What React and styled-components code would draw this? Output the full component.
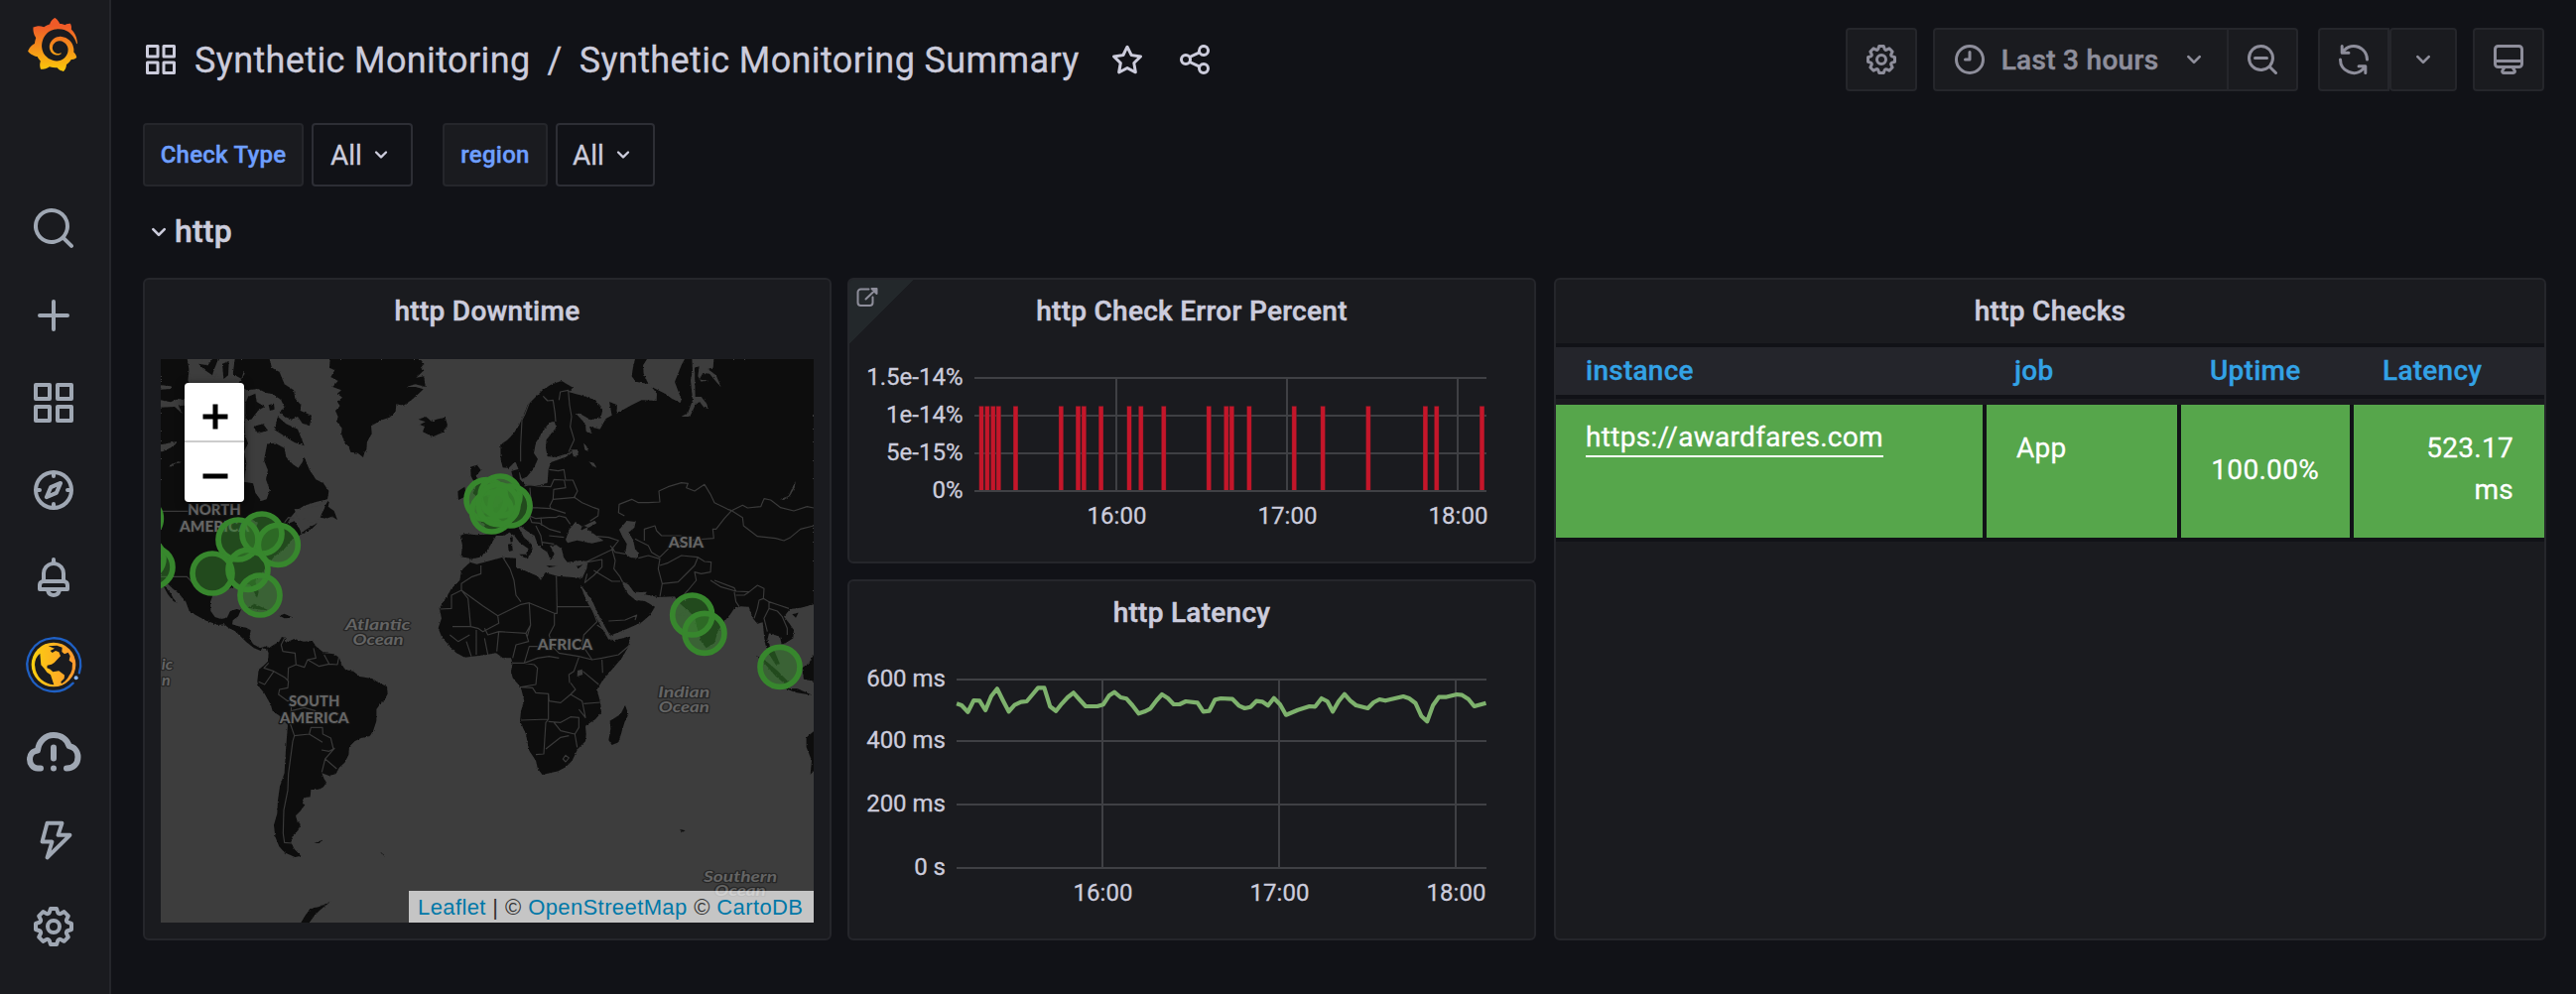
import React from 'react';
import styled, { createGlobalStyle } from 'styled-components';
import { SiGrafana } from 'react-icons/si';

const GlobalStyle = createGlobalStyle`
  * { box-sizing: border-box; }
  body { margin: 0; background: #111217; color: #ccccdc; font-family: Roboto, sans-serif; }
`;

const Page = styled.div`
  display: flex;
  width: 2596px;
  height: 1002px;
  overflow: hidden;
  background: #111217;
`;

const Sidebar = styled.nav`
  display: flex;
  flex-direction: column;
  align-items: center;
  width: 112px;
  padding-top: 18px;
  padding-right: 2px;
  background: #1a1b1f;
  border-right: 2px solid #25262b;
  color: #9fa7b3;
`;

const Logo = styled.div`
  height: 54px;
  margin-bottom: 114px;
  margin-right: 2px;
  svg { display: block; width: 54px; height: 54px; }
`;

const NavItem = styled.a`
  display: flex;
  align-items: center;
  justify-content: center;
  width: 88px;
  height: 88px;
  flex-shrink: 0;
  svg { overflow: visible; }
`;

const Main = styled.main`
  flex: 1;
  padding: 28px 30px 0 32px;
`;

const Header = styled.header`
  display: flex;
  align-items: center;
  height: 64px;
  padding-right: 2px;
`;

const Crumb = styled.span`
  margin-left: ${p => p.$gap}px;
  padding-top: 2px;
  font-size: 36px;
  line-height: 64px;
  letter-spacing: 0.38px;
  white-space: pre;
  -webkit-text-stroke: 0.3px currentColor;
`;

const HeaderIcon = styled.span`
  display: flex;
  margin-left: ${p => p.$gap || 0}px;
`;

const Spacer = styled.div`
  flex: 1;
`;

const ToolButton = styled.button`
  display: flex;
  align-items: center;
  justify-content: center;
  width: ${p => p.$width}px;
  height: 64px;
  margin: 0 0 0 ${p => p.$gap || 0}px;
  padding: 0;
  background: #1a1b1f;
  border: 2px solid #25262b;
  border-left-width: ${p => (p.$joined ? 0 : 2)}px;
  border-radius: ${p => p.$radius || '4px'};
  color: #8e8e9b;
  font: 500 28px Roboto, sans-serif;
`;

const RangeText = styled.span`
  margin: 0 20px 0 14px;
  letter-spacing: 0.3px;
  -webkit-text-stroke: 0.5px currentColor;
`;

const Filters = styled.div`
  display: flex;
  margin-top: 32px;
`;

const FilterLabel = styled.label`
  display: flex;
  align-items: center;
  justify-content: center;
  width: ${p => p.$width}px;
  height: 64px;
  margin-left: ${p => p.$gap || 0}px;
  background: #1a1b1f;
  border: 2px solid #25262b;
  border-radius: 4px;
  color: #6e9fff;
  font-size: 24px;
  font-weight: 500;
  letter-spacing: 0.26px;
  -webkit-text-stroke: 0.4px currentColor;
`;

const FilterSelect = styled.div`
  display: flex;
  align-items: center;
  width: ${p => p.$width}px;
  height: 64px;
  margin-left: 8px;
  padding-left: ${p => p.$pad}px;
  border: 2px solid #2d2e35;
  border-radius: 4px;
  font-size: 28px;
  -webkit-text-stroke: 0.3px currentColor;
  svg { margin-left: 5px; }
`;

const RowTitle = styled.h2`
  display: flex;
  align-items: center;
  height: 92px;
  margin: 0;
  padding: 0 0 2px;
  font-size: 32px;
  font-weight: 500;
  letter-spacing: 0.2px;
  -webkit-text-stroke: 0.5px currentColor;
  svg { margin-top: 2px; }
`;

const Grid = styled.section`
  display: grid;
  grid-template-columns: 694px 694px 1000px;
  grid-template-rows: 288px 364px;
  column-gap: 16px;
  row-gap: 16px;
`;

const Panel = styled.article`
  position: relative;
  display: flex;
  flex-direction: column;
  grid-row: ${p => p.$row || 'auto'};
  grid-column: ${p => p.$col};
  margin-left: ${p => p.$shift || 0}px;
  margin-right: -${p => p.$shift || 0}px;
  background: #1a1b1f;
  border: 2px solid #25262b;
  border-radius: 6px;
  overflow: hidden;
`;

const PanelTitle = styled.h3`
  height: 64px;
  margin: 0;
  font-size: 28px;
  font-weight: 500;
  line-height: 64px;
  letter-spacing: 0.28px;
  text-align: center;
  -webkit-text-stroke: 0.5px currentColor;
`;

const PanelCorner = styled.div`
  position: absolute;
  left: 0;
  top: 0;
  width: 64px;
  height: 64px;
  background: linear-gradient(135deg, #23282b 50%, transparent 50.5%);
  color: #8e8e9b;
  svg { margin: 5px 0 0 6px; }
`;

const MapFrame = styled.div`
  position: relative;
  width: 658px;
  height: 568px;
  margin: 16px 0 0 16px;
  background: #3c3c3c;
  overflow: hidden;
`;

const ZoomControl = styled.div`
  position: absolute;
  left: 24px;
  top: 24px;
  width: 60px;
  height: 120px;
  background: #fff;
  border-radius: 4px;
  box-shadow: 0 2px 10px rgba(0, 0, 0, 0.65);
`;

const ZoomButton = styled.div`
  display: flex;
  justify-content: center;
  height: 60px;
  padding-top: 21px;
  padding-left: 2px;
  border-bottom: ${p => (p.$divided ? '2px solid #ccc' : '0')};
`;

const Attribution = styled.div`
  position: absolute;
  right: 0;
  bottom: 0;
  width: 408px;
  height: 32px;
  padding-left: 9px;
  background: rgba(255, 255, 255, 0.7);
  color: #333;
  font: 22px/33px "Liberation Sans", Arial, sans-serif;
  letter-spacing: 0.4px;
  white-space: nowrap;
  a { color: #0078a8; }
`;

const Chart = styled.svg`
  display: block;
  overflow: visible;
  text { font: 24px Roboto, sans-serif; fill: #ccccdc; stroke: #ccccdc; stroke-width: 0.3px; }
`;

const Table = styled.div`
  display: grid;
  grid-template-columns: 430px 192px 170px 192px;
  column-gap: 4px;
  border-bottom: 4px solid #111217;
  background: #111217;
`;

const TableHead = styled.div`
  display: grid;
  grid-template-columns: 434px 196px 174px 192px;
  height: 56px;
  border-top: 4px solid #111217;
  border-bottom: 4px solid #111217;
  background: #24252b;
`;

const HeadCell = styled.div`
  padding-left: ${p => p.$pad}px;
  color: #33a2e5;
  font-size: 28px;
  font-weight: 500;
  line-height: 48px;
  letter-spacing: 0.26px;
  -webkit-text-stroke: 0.3px currentColor;
`;

const Strip = styled.div`
  height: 6px;
`;

const Cell = styled.div`
  height: 134px;
  padding: ${p => p.$top}px 31px 0 30px;
  background: #56a64b;
  color: #fff;
  font-size: 28px;
  line-height: 42px;
  letter-spacing: 0.3px;
  text-align: ${p => (p.$right ? 'right' : 'left')};
  -webkit-text-stroke: 0.3px currentColor;
`;

const Link = styled.a`
  display: inline-block;
  height: 40px;
  border-bottom: 2px solid #fff;
  line-height: 40px;
`;

const ICONS = {
  apps: 'M10,13H3a1,1,0,0,0-1,1v7a1,1,0,0,0,1,1h7a1,1,0,0,0,1-1V14A1,1,0,0,0,10,13ZM9,20H4V15H9ZM21,2H14a1,1,0,0,0-1,1v7a1,1,0,0,0,1,1h7a1,1,0,0,0,1-1V3A1,1,0,0,0,21,2ZM20,9H15V4h5Zm1,4H14a1,1,0,0,0-1,1v7a1,1,0,0,0,1,1h7a1,1,0,0,0,1-1V14A1,1,0,0,0,21,13Zm-1,7H15V15h5ZM10,2H3A1,1,0,0,0,2,3v7a1,1,0,0,0,1,1h7a1,1,0,0,0,1-1V3A1,1,0,0,0,10,2ZM9,9H4V4H9Z',
  search: 'M21.71,20.29,18,16.61A9,9,0,1,0,16.61,18l3.68,3.68a1,1,0,0,0,1.42,0A1,1,0,0,0,21.71,20.29ZM11,18a7,7,0,1,1,7-7A7,7,0,0,1,11,18Z',
  searchMinus: 'M21.71,20.29,18,16.61A9,9,0,1,0,16.61,18l3.68,3.68a1,1,0,0,0,1.42,0A1,1,0,0,0,21.71,20.29ZM11,18a7,7,0,1,1,7-7A7,7,0,0,1,11,18ZM15,10H7a1,1,0,0,0,0,2h8a1,1,0,0,0,0-2Z',
  plus: 'M19,11H13V5a1,1,0,0,0-2,0v6H5a1,1,0,0,0,0,2h6v6a1,1,0,0,0,2,0V13h6a1,1,0,0,0,0-2Z',
  compass: 'M12,2A10,10,0,1,0,22,12,10,10,0,0,0,12,2Zm1,17.93V19a1,1,0,0,0-2,0v.93A8,8,0,0,1,4.07,13H5a1,1,0,0,0,0-2H4.07A8,8,0,0,1,11,4.07V5a1,1,0,0,0,2,0V4.07A8,8,0,0,1,19.93,11H19a1,1,0,0,0,0,2h.93A8,8,0,0,1,13,19.93ZM15.14,7.55l-5,2.12a1,1,0,0,0-.52.52l-2.12,5a1,1,0,0,0,.21,1.1,1,1,0,0,0,.7.29.93.93,0,0,0,.4-.08l5-2.12a1,1,0,0,0,.52-.52l2.12-5a1,1,0,0,0-1.31-1.31Zm-2.49,5.1-2.28,1,1-2.28,2.28-1Z',
  bell: 'M18,13.18V10a6,6,0,0,0-5-5.91V3a1,1,0,0,0-2,0V4.09A6,6,0,0,0,6,10v3.18A3,3,0,0,0,4,16v2a1,1,0,0,0,1,1H8.14a4,4,0,0,0,7.72,0H19a1,1,0,0,0,1-1V16A3,3,0,0,0,18,13.18ZM8,10a4,4,0,0,1,8,0v3H8Zm4,10a2,2,0,0,1-1.72-1h3.44A2,2,0,0,1,12,20Zm6-3H6V16a1,1,0,0,1,1-1H17a1,1,0,0,1,1,1Z',
  cog: 'M21.32,9.55l-1.89-.63.89-1.78A1,1,0,0,0,20.13,6L18,3.87a1,1,0,0,0-1.15-.19l-1.78.89-.63-1.89A1,1,0,0,0,13.5,2h-3a1,1,0,0,0-.95.68L8.92,4.57,7.14,3.68A1,1,0,0,0,6,3.87L3.87,6a1,1,0,0,0-.19,1.15l.89,1.78-1.89.63A1,1,0,0,0,2,10.5v3a1,1,0,0,0,.68.95l1.89.63-.89,1.78A1,1,0,0,0,3.87,18L6,20.13a1,1,0,0,0,1.15.19l1.78-.89.63,1.89a1,1,0,0,0,.95.68h3a1,1,0,0,0,.95-.68l.63-1.89,1.78.89A1,1,0,0,0,18,20.13L20.13,18a1,1,0,0,0,.19-1.15l-.89-1.78,1.89-.63A1,1,0,0,0,22,13.5v-3A1,1,0,0,0,21.32,9.55ZM20,12.78l-1.2.4A2,2,0,0,0,17.64,16l.57,1.14-1.1,1.1L16,17.64a2,2,0,0,0-2.79,1.16l-.4,1.2H11.22l-.4-1.2A2,2,0,0,0,8,17.64l-1.14.57-1.1-1.1L6.36,16A2,2,0,0,0,5.2,13.18L4,12.78V11.22l1.2-.4A2,2,0,0,0,6.36,8L5.79,6.89l1.1-1.1L8,6.36A2,2,0,0,0,10.82,5.2l.4-1.2h1.56l.4,1.2A2,2,0,0,0,16,6.36l1.14-.57,1.1,1.1L17.64,8a2,2,0,0,0,1.16,2.79l1.2.4ZM12,8a4,4,0,1,0,4,4A4,4,0,0,0,12,8Zm0,6a2,2,0,1,1,2-2A2,2,0,0,1,12,14Z',
  star: 'M22,9.67A1,1,0,0,0,21.14,9l-5.69-.83L12.9,3a1,1,0,0,0-1.8,0L8.55,8.16,2.86,9a1,1,0,0,0-.81.68,1,1,0,0,0,.25,1l4.13,4-1,5.68A1,1,0,0,0,6.9,21.44L12,18.77l5.1,2.67a.93.93,0,0,0,.46.12,1,1,0,0,0,.59-.19,1,1,0,0,0,.4-1l-1-5.68,4.13-4A1,1,0,0,0,22,9.67Zm-6.15,4a1,1,0,0,0-.29.88l.72,4.2-3.76-2a1.06,1.06,0,0,0-.94,0l-3.76,2,.72-4.2a1,1,0,0,0-.29-.88l-3-3,4.21-.61a1,1,0,0,0,.76-.55L12,5.7l1.88,3.82a1,1,0,0,0,.76.55l4.21.61Z',
  share: 'M18,14a4,4,0,0,0-3.08,1.48l-5.1-2.35a3.64,3.64,0,0,0,0-2.26l5.1-2.35A4,4,0,1,0,14,6a4.17,4.17,0,0,0,.07.71L8.79,9.14a4,4,0,1,0,0,5.72l5.28,2.43A4.17,4.17,0,0,0,14,18a4,4,0,1,0,4-4ZM18,4a2,2,0,1,1-2,2A2,2,0,0,1,18,4ZM6,14a2,2,0,1,1,2-2A2,2,0,0,1,6,14Zm12,6a2,2,0,1,1,2-2A2,2,0,0,1,18,20Z',
  clock: 'M12,2A10,10,0,1,0,22,12,10,10,0,0,0,12,2Zm0,18a8,8,0,1,1,8-8A8,8,0,0,1,12,20ZM12,6a1,1,0,0,0-1,1v4H9a1,1,0,0,0,0,2h3a1,1,0,0,0,1-1V7A1,1,0,0,0,12,6Z',
  angleDown: 'M17,9.17a1,1,0,0,0-1.41,0L12,12.71,8.46,9.17a1,1,0,0,0-1.41,0,1,1,0,0,0,0,1.42l4.24,4.24a1,1,0,0,0,1.42,0L17,10.59A1,1,0,0,0,17,9.17Z',
  sync: 'M19.91,15.51H15.38a1,1,0,0,0,0,2h2.4A8,8,0,0,1,4,12a1,1,0,1,0-2,0,10,10,0,0,0,16.88,7.23V21a1,1,0,0,0,2,0V16.5A1,1,0,0,0,19.91,15.51ZM12,2A10,10,0,0,0,5.12,4.77V3a1,1,0,0,0-2,0V7.5a1,1,0,0,0,1,1h4.5a1,1,0,0,0,0-2H6.22A8,8,0,0,1,20,12a1,1,0,0,0,2,0A10,10,0,0,0,12,2Z',
  monitor: 'M19,2H5A3,3,0,0,0,2,5V15a3,3,0,0,0,3,3H7.64l-.58,1a2,2,0,0,0,0,2,2,2,0,0,0,1.75,1h6.46A2,2,0,0,0,17,21a2,2,0,0,0,0-2l-.59-1H19a3,3,0,0,0,3-3V5A3,3,0,0,0,19,2ZM8.77,20,10,18H14l1.2,2ZM20,15a1,1,0,0,1-1,1H5a1,1,0,0,1-1-1V14H20Zm0-3H4V5A1,1,0,0,1,5,4H19a1,1,0,0,1,1,1Z',
};

const Icon = ({ name, size = 36 }) => (
  <svg width={size} height={size} viewBox="0 0 24 24" fill="currentColor" aria-hidden="true">
    <path d={ICONS[name]} />
  </svg>
);

const GlobeIcon = () => (
  <svg width="56" height="56" viewBox="0 0 168 168" fill="none">
    <defs>
      <linearGradient id="globe" x1="0" x2="1">
        <stop offset="0" stopColor="#fbd00f" />
        <stop offset="1" stopColor="#ff9830" />
      </linearGradient>
    </defs>
    <path d="M161.500 109A80.500 80.500 0 1 0 143 140" stroke="#1f60c4" strokeWidth="7" strokeLinecap="round" />
    <circle cx="84" cy="84" r="67" fill="url(#globe)" />
    <g fill="#1a1b1f" transform="translate(-78 -432)">
      <path d="M121 482Q106 494 105 516Q107 545 124 560Q140 574 163 577L158 562 153 547 142 539 134 528 124 517Z" />
      <path d="M146 460L172 458 188 464 187 477 195 484 206 479 212 490 209 503 219 511 218 530 213 544 200 553 192 545 178 535 160 538 152 530 142 526 143 518 156 515 164 510 183 490 178 478 168 474 158 480 152 474 165 467Z" />
      <path d="M212 540Q208 560 186 574L184 568 194 558 195 548Z" />
    </g>
    <circle cx="152" cy="124" r="6" fill="#8ab8ff" />
  </svg>
);

const CloudIcon = () => (
  <svg width="56" height="44" viewBox="0 0 56 44" fill="none" stroke="currentColor" strokeWidth="6" strokeLinecap="round" strokeLinejoin="round">
    <path d="M15 38.5H12C7 38.5 4 34 4 29.5C4 24.500 7 21 12 20.500C13 11 20 5 28 5C36 5 42 9.500 43.500 16C49 17 52.500 21.500 52.500 27C52.500 34 48 38.500 41 38.500" />
    <path d="M28 17.500V28.500M28 38.500V38.600" />
  </svg>
);

const BoltIcon = () => (
  <svg width="48" height="48" viewBox="0 0 48 48" fill="none" stroke="currentColor" strokeWidth="3.900" strokeLinejoin="round">
    <path d="M19.500 7.800H34.500L30.500 19.800H42.500L19.500 42.500L24.500 26.500H14.500Z" transform="translate(-2 0)" />
  </svg>
);

/* World map shapes, in the coordinates of the map's viewBox. */
const LAND = [
  // North and Central America
  'M66 66L150 66 152 95 148 130 160 160 300 170 318 240 322 300 330 320 318 345 325 380 318 437 345 442 352 470 370 495 386 490 396 462 384 430 390 402 378 372 388 322 412 320 440 335 445 362 466 385 482 395 494 378 500 362 515 400 535 430 558 442 574 465 570 490 535 498 498 510 475 525 458 545 448 565 470 556 486 580 490 592 515 575 540 562 522 580 490 596 462 612 440 640 410 662 388 690 375 708 352 738 362 770 357 788 346 765 335 748 308 745 290 752 275 760 248 760 225 775 216 800 217 828 230 846 248 852 266 848 276 828 296 822 308 826 300 844 284 856 282 868 300 874 324 878 338 886 334 910 345 928 366 940 385 934 396 940 386 945 374 938 368 948 348 940 325 922 308 905 290 888 270 878 258 868 240 870 200 856 172 840 152 828 142 800 122 776 100 758 82 740 78 752 96 774 104 790 116 803 104 798 88 778 76 756 66 752Z',
  'M312 66L395 66 402 92 425 105 440 142 468 160 472 185 490 205 488 222 522 236 516 268 494 260 480 240 462 248 440 240 425 225 440 212 430 190 405 172 385 168 360 156 325 160 300 140 320 110 310 90Z',
  'M290 66L312 66 318 100 310 125 284 112Z',
  'M330 180L352 170 356 195 380 210 360 222 340 248 322 250 322 200Z',
  'M420 240L445 262 480 278 500 328 470 318 442 300 410 280Z',
  'M392 205L408 200 410 218 396 222Z',
  'M345 270L375 262 390 282 360 290Z',
  'M548 545L562 505 576 494 572 512 590 525 600 552 584 542 566 548Z',
  'M325 820L350 806 392 826 370 824 340 820ZM425 842L440 836 466 848 440 850Z',
  // Greenland and Iceland
  'M578 66L576 92 592 100 580 120 602 132 586 150 612 160 600 170 615 182 600 195 608 208 594 222 602 240 598 255 614 275 612 292 622 318 634 330 640 347 662 350 678 363 682 348 688 340 690 316 704 292 702 268 735 250 758 242 776 226 778 202 800 206 824 190 846 170 860 157 836 150 808 150 836 142 866 150 862 118 838 122 862 100 852 92 862 80 850 66Z',
  'M845 248L866 256 850 264 864 270 858 286 888 301 918 288 933 266 926 242 900 248 884 254 868 240Z',
  // South America
  'M388 945L398 936 424 920 432 906 446 910 440 925 470 912 498 920 524 918 536 935 560 955 590 958 606 970 612 988 624 1005 648 1010 668 1026 705 1032 725 1045 750 1056 752 1078 742 1098 730 1108 718 1125 718 1160 708 1190 698 1206 672 1212 652 1222 636 1238 634 1262 622 1286 605 1302 596 1320 575 1326 553 1318 560 1336 567 1346 558 1360 545 1367 520 1368 518 1390 498 1393 495 1410 502 1414 490 1430 474 1447 478 1462 488 1472 482 1490 464 1508 460 1528 470 1548 490 1568 472 1572 440 1558 424 1540 412 1510 408 1475 418 1440 420 1400 426 1358 440 1318 444 1250 450 1172 424 1144 404 1130 398 1110 380 1078 360 1052 358 1040 362 1005 376 994 390 980 392 955Z',
  'M490 1770L505 1745 520 1728 545 1722 580 1706 548 1732 530 1750 515 1770Z',
  'M530 1530L555 1520 545 1530ZM728 1558L744 1568 738 1562Z',
  // British Isles
  'M964 466L985 452 990 480 966 492ZM1002 392L1022 386 1034 402 1018 420 1036 440 1046 470 1060 490 1056 510 1010 512 1025 490 1010 470 1020 450 1004 420Z',
  // Eurasia and Africa, joined across the Mediterranean
  'M972 600L985 594 1020 598 1052 596 1045 565 1020 548 1050 530 1085 510 1110 480 1122 455 1140 450 1132 430 1126 405 1148 398 1152 430 1170 448 1210 448 1235 440 1238 400 1246 378 1290 362 1316 345 1260 362 1235 360 1230 335 1232 310 1262 272 1256 255 1240 258 1218 290 1200 318 1194 350 1206 368 1192 400 1172 422 1158 428 1148 400 1138 376 1118 395 1100 394 1094 370 1093 325 1115 310 1132 292 1150 265 1165 230 1175 205 1200 180 1222 158 1248 142 1278 132 1312 152 1300 166 1345 178 1380 190 1402 220 1396 244 1366 250 1332 230 1322 232 1350 262 1352 285 1370 292 1362 270 1394 278 1412 246 1430 236 1422 195 1446 205 1444 230 1490 205 1520 190 1565 192 1566 170 1550 150 1590 170 1612 186 1637 198 1640 188 1620 135 1640 85 1650 66 2040 66 2040 808 2000 818 1968 822 1950 845 1966 865 1980 885 1978 910 1955 925 1943 928 1938 905 1905 895 1900 915 1908 935 1922 950 1938 988 1925 990 1900 950 1892 920 1886 862 1870 866 1856 850 1844 815 1820 814 1800 820 1788 838 1765 865 1750 890 1740 925 1715 940 1700 920 1688 880 1680 845 1652 820 1630 800 1620 784 1570 786 1530 778 1512 770 1500 770 1490 775 1500 795 1530 798 1560 815 1545 840 1520 862 1480 880 1425 902 1430 917 1485 905 1480 935 1460 970 1430 1005 1400 1040 1385 1065 1390 1085 1396 1110 1398 1135 1380 1155 1350 1175 1352 1200 1350 1222 1326 1246 1310 1280 1290 1300 1268 1312 1220 1323 1206 1305 1200 1280 1180 1250 1170 1200 1152 1160 1155 1130 1165 1100 1155 1060 1130 1030 1125 1010 1130 985 1125 970 1100 970 1080 955 1050 960 985 968 960 955 940 935 915 905 905 880 915 850 908 820 930 785 945 760 970 735 975 705 1000 682 1000 668 974 664 978 630Z',
  'M1500 66L1494 90 1490 118 1502 134 1540 141 1526 110 1524 85 1536 66Z',
  'M1470 1113L1480 1140 1468 1165 1450 1225 1430 1233 1420 1218 1426 1185 1424 1160 1456 1140Z',
  'M1865 962L1895 978 1930 1008 1962 1040 1958 1052 1925 1025 1890 985ZM2005 1000L2026 985 2040 960 2040 1040 2010 1034ZM1955 1062L1990 1062 2036 1082 1985 1074Z',
  'M2018 1210L2040 1192 2040 1312 2030 1322 2034 1280 2018 1240ZM1975 838L1994 833 1986 848ZM1636 1488L1652 1492 1640 1498Z',
];

const WATER = [
  'M1000 680L1022 686 1100 665 1140 668 1140 695 1165 705 1205 722 1215 735 1228 712 1265 722 1340 728 1354 700 1358 678 1335 675 1295 680 1284 665 1278 640 1262 628 1242 630 1256 655 1245 675 1235 650 1218 638 1205 625 1196 600 1172 585 1156 572 1148 576 1164 605 1186 625 1190 640 1182 660 1170 655 1178 640 1150 620 1135 600 1120 590 1104 600 1080 600 1062 630 1050 650 1030 665 1000 672Z',
  'M1290 612L1302 580 1320 558 1340 572 1335 585 1360 572 1355 580 1386 602 1405 615 1370 623 1325 614 1296 622ZM1345 570L1378 554 1384 562 1360 575Z',
  'M1452 582L1475 555 1502 558 1498 576 1480 590 1494 612 1500 640 1510 652 1508 668 1486 666 1470 655 1475 625 1462 604Z',
  'M1462 738L1480 748 1498 772 1535 770 1530 780 1512 784 1505 797 1480 778 1464 752Z',
  'M1334 748L1348 765 1372 800 1395 850 1418 890 1430 912 1420 914 1400 880 1375 835 1352 795Z',
  'M1326 1008L1340 1004 1342 1020 1325 1026ZM1308 340L1326 340 1328 356 1314 362ZM1344 320L1354 330 1358 345 1348 340ZM1360 375L1376 380 1384 395 1370 388Z',
  'M1672 66L1738 66 1736 92 1720 96 1745 115 1760 150 1750 140 1725 110 1705 108 1694 128 1722 130 1700 134 1690 118 1694 88 1680 92 1682 180 1700 180 1716 200 1722 216 1708 212 1696 196 1684 200 1666 240 1640 240 1660 228 1674 190 1668 130 1674 100Z',
  'M1938 490L1964 480 1985 434 1982 455 1968 480 1950 492Z',
  'M66 145L98 148 96 156 66 158ZM66 190L96 196 118 186 138 190 138 206 120 208 132 232 108 210 66 212ZM66 325L118 314 104 330 72 346 66 346ZM92 388L118 376 132 378 110 382 96 392ZM146 66L190 66 188 90 208 118 230 120 232 66 285 66 284 110 300 138 252 138 235 110 220 140 160 140Z',
  'M470 520L505 518 540 510 570 490 560 520 540 556 520 560 505 548 486 552 478 540ZM330 545L360 560 352 580 340 560Z',
  'M1630 840L1660 826 1668 836 1650 842Z',
];

const ISLANDS = [
  'M1150 656L1180 656 1176 670 1160 664ZM1116 626L1128 624 1130 645 1118 648ZM1122 606L1130 604 1130 618 1124 620ZM1232 690L1262 692 1240 696ZM1322 692L1342 688 1330 698Z',
  'M180 80L208 85 222 66 240 66 228 95 222 115 200 100ZM252 80L272 72 270 115 256 126Z',
];

const BORDERS = [
  'M66 526L150 526M66 724L130 724 145 724 165 745 200 775M440 560L452 545 470 548',
  'M1165 450L1180 446 1205 450 1245 452 1255 430 1286 432 1290 455 1254 460 1252 490 1320 484M1240 400L1268 404 1285 400 1290 432 1312 432 1326 465 1316 484 1340 500 1375 515 1390 520 1388 540 1364 556',
  'M1184 188L1168 230 1158 250 1154 330 1154 376M1222 178L1235 192 1252 190 1258 230 1260 255M1222 178L1236 192M1270 190L1274 165 1298 160 1302 205 1308 240 1304 270 1316 310 1300 345',
  'M1252 490L1242 510 1245 518 1290 532M1245 518L1190 515 1180 540 1200 548 1240 545 1260 545 1270 540 1290 545 1304 565M1180 540L1188 560 1210 562 1240 580 1275 590M1190 515L1184 480 1182 455M1200 570L1215 600 1220 630M1240 600L1285 605M1220 620L1255 625M1215 545L1218 570',
  'M1385 602L1420 605 1450 615 1430 640 1435 640 1350 680M1425 630L1440 650 1470 655M1430 640L1440 675 1436 700 1455 725 1462 740M1350 695L1355 680 1400 672 1400 695 1375 720 1348 742 1355 715M1375 705L1400 720 1430 738 1455 738',
  'M1468 540L1450 530 1452 505 1490 490 1510 500 1540 500 1575 498 1572 465 1600 452 1640 440 1660 442 1655 455 1680 465 1710 445 1728 475 1740 500 1780 520 1792 524 1770 548 1745 580 1735 580 1738 608 1680 612 1640 625 1620 612 1600 640 1575 665 1550 650 1540 630 1510 615 1500 610',
  'M1528 615L1528 580 1560 570 1565 585 1580 600 1600 600 1640 600M1510 668L1540 660 1575 670 1570 700 1582 745 1575 785M1575 690L1600 682 1640 660 1690 665 1680 690 1650 720 1630 740 1582 745M1690 665L1710 678 1730 680 1728 710 1700 715 1680 710 1685 735 1660 765 1650 775 1652 798',
  'M1792 524L1825 508 1840 516 1880 512 1890 488 1910 492 1940 515 1980 525 2020 512 2040 516M1792 524L1825 545 1828 570 1870 602 1925 608 1950 615 1970 605 2000 580 2040 570',
  'M1728 735L1760 755 1805 768 1800 758 1740 735M1805 768L1845 770 1870 750 1890 760 1888 790 1875 795 1870 820 1860 850M1800 770L1805 800 1815 815M1845 770L1830 780 1805 780M1888 790L1905 800 1905 820 1890 850 1900 890M1905 820L1930 828 1945 845 1960 880 1960 900M1905 800L1935 810 1965 820',
  'M1262 722L1264 815 1368 815M1264 815L1264 835 1256 835 1180 803 1155 808 1085 842 1040 812 975 765M1100 665L1122 700 1134 735 1140 780 1155 800M1034 690L1034 715 1005 725 975 745 975 765 945 780 945 820 910 822M975 765L995 790 1003 875 948 875M1085 842L1088 865 1040 890 1025 880 1003 875',
  'M1256 835L1256 870 1240 900 1250 935 1270 955 1330 965 1370 975M1180 803L1184 870 1170 895 1088 890 1055 900 1045 880M1170 895L1178 920 1140 930 1130 970M1184 870L1174 905M1250 935L1180 935 1165 985 1130 985M1020 885L1020 960M1045 910L1055 960M990 920L1005 965M1000 900L965 920 940 900M1088 890L1082 950',
  'M1368 815L1385 860 1370 875 1345 900 1340 930 1370 975 1400 970 1450 960 1485 930M1385 870L1415 890M1420 900L1440 920M1420 858L1470 855 1505 840 1500 855M1330 968L1315 1010 1300 1020 1302 1045M1400 975L1402 1015M1342 1010L1390 1050M1165 985L1205 970 1240 965 1270 970M1165 985L1195 990 1205 1000 1200 1050 1155 1058 1190 1060 1200 1075 1238 1078 1240 1100 1275 1105 1305 1080 1320 1065 1305 1045M1345 1108L1396 1104M1238 1078L1238 1155 1155 1158M1305 1080L1340 1100 1350 1150 1330 1125M1238 1155L1230 1165 1224 1260 1200 1262M1238 1162L1275 1165 1305 1148 1330 1150 1330 1180 1318 1200 1275 1190 1255 1165M1300 1205L1275 1210 1230 1245M1318 1200L1325 1240M1282 1275L1290 1264 1300 1272 1290 1284Z',
  'M392 985L378 1000 408 1010 380 1050 362 1042M408 1010L440 1028 452 1040 450 1060 425 1065 422 1080 450 1100 462 1095 460 1130 500 1120 535 1130M440 910L430 930 435 950 472 955 475 990 452 1000 450 1040M475 990L500 998 510 975 535 970 528 940M510 975L545 995 575 988 560 960M575 988L600 990 605 965M460 1130L458 1170 470 1205 465 1222 452 1320 450 1370 438 1430 436 1500 440 1528 462 1530M470 1205L515 1200 520 1180 555 1180 556 1200 580 1212 588 1245 575 1252 552 1248M515 1200L555 1225M592 1242L563 1275 598 1305M563 1275L553 1315',
];

const MARKERS = [
  [300, 612], [372, 594], [421, 628], [222, 714], [330, 703], [366, 780],
  [7, 548], [15, 668], [42, 695],
  [1050, 491], [1092, 480], [1067, 528], [1122, 510], [1086, 506],
  [1654 + 19, 840], [1710, 895], [1938, 997],
];

const MAP_LABELS = [
  { x: 228, y: 537, w: 160, text: 'NORTH' },
  { x: 228, y: 588, w: 210, text: 'AMERICA' },
  { x: 530, y: 1117, w: 154, text: 'SOUTH' },
  { x: 530, y: 1168, w: 210, text: 'AMERICA' },
  { x: 1288, y: 945, w: 166, text: 'AFRICA' },
  { x: 1654, y: 635, w: 106, text: 'ASIA' },
  { x: 722, y: 884, w: 196, text: 'Atlantic', water: true },
  { x: 723, y: 929, w: 153, text: 'Ocean', water: true },
  { x: 1648, y: 1088, w: 156, text: 'Indian', water: true },
  { x: 1648, y: 1133, w: 154, text: 'Ocean', water: true },
  { x: 1818, y: 1646, w: 222, text: 'Southern', water: true },
  { x: 1818, y: 1690, w: 154, text: 'Ocean', water: true },
  { x: 85, y: 1006, w: 34, text: 'ic', water: true },
  { x: 82, y: 1052, w: 26, text: 'n', water: true },
];

const WorldMap = () => (
  <svg width="658" height="568" viewBox="66 66 1974 1704" preserveAspectRatio="none" fill="none">
    <defs>
      <filter id="coast" x="0" y="0" width="100%" height="100%">
        <feTurbulence type="fractalNoise" baseFrequency="0.2" numOctaves="3" seed="4" />
        <feDisplacementMap in="SourceGraphic" scale="7" xChannelSelector="R" yChannelSelector="G" />
      </filter>
    </defs>
    <g filter="url(#coast)">
      <rect x="40" y="40" width="2020" height="1750" fill="#3c3c3c" />
      <g fill="#0e0e0e">{LAND.map(d => <path key={d} d={d} />)}</g>
      <g fill="#3c3c3c">{WATER.map(d => <path key={d} d={d} />)}</g>
      <g fill="#0e0e0e">{ISLANDS.map(d => <path key={d} d={d} />)}</g>
    </g>
    <g stroke="#3a3a3a" strokeWidth="3.500" strokeLinejoin="round">
      {BORDERS.map(d => <path key={d} d={d} />)}
    </g>
    <g fontFamily="Lato, sans-serif" textAnchor="middle" paintOrder="stroke" strokeLinejoin="round">
      {MAP_LABELS.map(l => (
        <text
          key={l.text + l.x + l.y}
          x={l.x}
          y={l.y}
          fontSize={l.water ? 44 : 45}
          fontWeight={l.water ? 700 : 900}
          fontStyle={l.water ? 'italic' : 'normal'}
          fill={l.water ? '#646464' : '#656565'}
          stroke={l.water ? '#262626' : '#161616'}
          strokeWidth="7"
          textLength={l.w}
          lengthAdjust="spacingAndGlyphs"
        >
          {l.text}
        </text>
      ))}
    </g>
    <g fill="#37872d" fillOpacity="0.5" stroke="#37872d" strokeWidth="17">
      {MARKERS.map(([x, y]) => <circle key={`${x}-${y}`} cx={x} cy={y} r="60" />)}
    </g>
  </svg>
);

/* The charts' viewBoxes start at the panel's top-left corner plus the title. */
const ERROR_BARS = [989, 994.9, 1000.8, 1006.3, 1023.5, 1069.3, 1086.5, 1092.3, 1109.6, 1138, 1149.8, 1172.8, 1218.2, 1235.8, 1241.3, 1258.9, 1304.2, 1333.1, 1378.9, 1436.4, 1447.8, 1493.5];

const ErrorChart = () => (
  <Chart width="690" height="220" viewBox="856 346 690 220">
    <g fill="#3f4044">
      {[380, 418, 456, 494].map(y => <rect key={y} x="982" y={y} width="516" height="2" />)}
      {[1124, 1296, 1468].map(x => <rect key={x} x={x} y="380" width="2" height="115" />)}
    </g>
    {ERROR_BARS.map(x => (
      <g key={x}>
        <rect x={x - 2.4} y="409.200" width="4.800" height="84.800" fill="#7d1a26" />
        <rect x={x - 2} y="410" width="4" height="84" fill="#c4162a" />
      </g>
    ))}
    <g textAnchor="end">
      <text x="970.500" y="388">1.5e-14%</text>
      <text x="970.500" y="426">1e-14%</text>
      <text x="970.500" y="464">5e-15%</text>
      <text x="970.500" y="502">0%</text>
    </g>
    <g textAnchor="middle">
      <text x="1125.500" y="528">16:00</text>
      <text x="1297.500" y="528">17:00</text>
      <text x="1469.500" y="528">18:00</text>
    </g>
  </Chart>
);

const LATENCY = [
  [252, 403], [263, 408], [277, 428], [290, 393], [303, 394], [316, 423], [329, 380], [342, 358], [355, 393], [368, 427],
  [381, 407], [395, 398], [408, 396], [421, 375], [433, 355], [447, 355], [460, 412], [473, 425], [486, 403], [499, 384],
  [512, 370], [525, 390], [539, 411], [565, 411], [578, 406], [591, 379], [603, 368], [617, 384], [630, 388], [643, 408],
  [657, 433], [670, 427], [683, 418], [697, 393], [709, 375], [722, 386], [735, 405], [748, 405], [762, 396], [788, 400],
  [801, 427], [814, 425], [827, 391], [840, 387], [866, 389], [880, 409], [893, 417], [906, 413], [919, 395], [932, 397],
  [945, 409], [958, 386], [972, 406], [985, 437], [1011, 422], [1037, 411], [1050, 412], [1064, 387], [1077, 396],
  [1089, 427], [1102, 396], [1115, 374], [1128, 394], [1141, 408], [1167, 417], [1180, 399], [1193, 390], [1206, 394],
  [1246, 381], [1259, 387], [1273, 401], [1286, 440], [1299, 457], [1312, 408], [1325, 383], [1340, 383], [1365, 375],
  [1377, 377], [1391, 389], [1404, 411], [1430, 401],
];

const latencyPoints = LATENCY
  .map(([x, y]) => `${(850 + x * 0.4528).toFixed(1)},${(575 + y / 3).toFixed(1)}`)
  .join(' ');

const LatencyChart = () => (
  <Chart width="690" height="296" viewBox="856 650 690 296">
    <g fill="#3f4044">
      {[684, 746, 810, 874].map(y => <rect key={y} x="964" y={y} width="534" height="2" />)}
      {[1110, 1288, 1466].map(x => <rect key={x} x={x} y="684" width="2" height="191" />)}
    </g>
    <polyline points={latencyPoints} fill="none" stroke="#7eb26d" strokeWidth="4.200" strokeLinejoin="round" />
    <g textAnchor="end">
      <text x="953" y="692">600 ms</text>
      <text x="953" y="754">400 ms</text>
      <text x="953" y="818">200 ms</text>
      <text x="953" y="882">0 s</text>
    </g>
    <g textAnchor="middle">
      <text x="1111.500" y="908">16:00</text>
      <text x="1289.500" y="908">17:00</text>
      <text x="1467.500" y="908">18:00</text>
    </g>
  </Chart>
);

const App = () => (
  <Page>
    <GlobalStyle />
    <Sidebar>
      <Logo>
        <svg width="0" height="0" style={{ position: 'absolute' }}>
          <defs>
            <linearGradient id="flame" x1="0" y1="0" x2="0" y2="1">
              <stop offset="0.150" stopColor="#f05a28" />
              <stop offset="1" stopColor="#fbca0a" />
            </linearGradient>
          </defs>
        </svg>
        <SiGrafana fill="url(#flame)" />
      </Logo>
      <NavItem><Icon name="search" size={48} /></NavItem>
      <NavItem><Icon name="plus" size={48} /></NavItem>
      <NavItem><Icon name="apps" size={48} /></NavItem>
      <NavItem><Icon name="compass" size={48} /></NavItem>
      <NavItem><Icon name="bell" size={48} /></NavItem>
      <NavItem><GlobeIcon /></NavItem>
      <NavItem><CloudIcon /></NavItem>
      <NavItem><BoltIcon /></NavItem>
      <NavItem><Icon name="cog" size={48} /></NavItem>
    </Sidebar>
    <Main>
      <Header>
        <Icon name="apps" />
        <Crumb $gap={16}>Synthetic Monitoring</Crumb>
        <Crumb $gap={17}>/</Crumb>
        <Crumb $gap={17}>Synthetic Monitoring Summary</Crumb>
        <HeaderIcon $gap={30}><Icon name="star" /></HeaderIcon>
        <HeaderIcon $gap={32}><Icon name="share" /></HeaderIcon>
        <Spacer />
        <ToolButton $width={72}><Icon name="cog" /></ToolButton>
        <ToolButton $width={298} $gap={16} $radius="4px 0 0 4px">
          <Icon name="clock" />
          <RangeText>Last 3 hours</RangeText>
          <Icon name="angleDown" size={32} />
        </ToolButton>
        <ToolButton $width={70} $joined $radius="0 4px 4px 0"><Icon name="searchMinus" /></ToolButton>
        <ToolButton $width={72} $gap={20} $radius="4px 0 0 4px"><Icon name="sync" /></ToolButton>
        <ToolButton $width={68} $radius="4px"><Icon name="angleDown" size={32} /></ToolButton>
        <ToolButton $width={72} $gap={16}><Icon name="monitor" /></ToolButton>
      </Header>
      <Filters>
        <FilterLabel $width={162}>Check Type</FilterLabel>
        <FilterSelect $width={102} $pad={17}>All<Icon name="angleDown" size={28} /></FilterSelect>
        <FilterLabel $width={106} $gap={30}>region</FilterLabel>
        <FilterSelect $width={100} $pad={15}>All<Icon name="angleDown" size={28} /></FilterSelect>
      </Filters>
      <RowTitle><Icon name="angleDown" size={32} />http</RowTitle>
      <Grid>
        <Panel $row="1 / 3" $col="1">
          <PanelTitle>http Downtime</PanelTitle>
          <MapFrame>
            <WorldMap />
            <ZoomControl>
              <ZoomButton $divided>
                <svg width="26" height="26" viewBox="0 0 26 26"><path d="M13 0.500V25.500M0.500 13H25.500" stroke="#000" strokeWidth="5" /></svg>
              </ZoomButton>
              <ZoomButton>
                <svg width="26" height="26" viewBox="0 0 26 26"><path d="M0.500 13H25.500" stroke="#000" strokeWidth="5" /></svg>
              </ZoomButton>
            </ZoomControl>
            <Attribution>
              <a>Leaflet</a> | © <a>OpenStreetMap</a> © <a>CartoDB</a>
            </Attribution>
          </MapFrame>
        </Panel>
        <Panel $row="1" $col="2">
          <PanelCorner>
            <svg width="26" height="26" viewBox="0 0 26 26" fill="none" stroke="currentColor" strokeWidth="2" strokeLinecap="round" strokeLinejoin="round">
              <path d="M13.500 4.500H5.500A3 3 0 0 0 2.500 7.500V18A3 3 0 0 0 5.500 21H14.500A3 3 0 0 0 17.500 18V12.500" />
              <path d="M10.500 14.500L21 4.500M16.500 4H21.500V9Z" fill="currentColor" />
            </svg>
          </PanelCorner>
          <PanelTitle>http Check Error Percent</PanelTitle>
          <ErrorChart />
        </Panel>
        <Panel $row="2" $col="2">
          <PanelTitle>http Latency</PanelTitle>
          <LatencyChart />
        </Panel>
        <Panel $row="1 / 3" $col="3" $shift={2}>
          <PanelTitle>http Checks</PanelTitle>
          <TableHead>
            <HeadCell $pad={30}>instance</HeadCell>
            <HeadCell $pad={28}>job</HeadCell>
            <HeadCell $pad={29}>Uptime</HeadCell>
            <HeadCell $pad={29}>Latency</HeadCell>
          </TableHead>
          <Strip />
          <Table>
            <Cell $top={12}><Link>https://awardfares.com</Link></Cell>
            <Cell $top={23}>App</Cell>
            <Cell $top={45} $right>100.00%</Cell>
            <Cell $top={23} $right>523.17<br />ms</Cell>
          </Table>
        </Panel>
      </Grid>
    </Main>
  </Page>
);

export default App;
